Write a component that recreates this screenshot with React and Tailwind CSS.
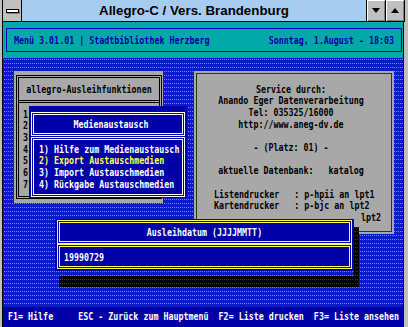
import React from 'react';

// one text row of the DOS screen: 5px cells, 11.67px rows
const Line = ({ children, className = '' }) => (
    <div className={`w-fit h-[11.67px] flex items-center ${className}`}>
        <div className="h-[8px] leading-[8px] text-[8.33px] font-bold whitespace-pre scale-y-[1.2]">{children}</div>
    </div>
);

const dots =
    'bg-[#20b8b8] bg-[image:repeating-linear-gradient(0deg,#0c1cc4_0_3px,transparent_3px_4px),repeating-linear-gradient(90deg,#0c1cc4_0_1px,transparent_1px_2px)]';
const shade =
    'bg-[#3a3a3a] bg-[image:repeating-linear-gradient(0deg,#000_0_3px,transparent_3px_4px),repeating-linear-gradient(90deg,#000_0_1px,transparent_1px_2px)]';

function TitleButton({ up }) {
    return (
        <div className="w-[19px] h-full border-l border-black bg-[#c0c0c0] flex items-center justify-center shadow-[inset_1px_1px_0_#fff,inset_-1px_-1px_0_#808080]">
            <svg width="8" height="5" viewBox="0 0 8 5">
                <polygon points={up ? '0,5 8,5 4,0' : '0,0 8,0 4,5'} fill="#000" />
            </svg>
        </div>
    );
}

export default function App() {
    const service = [
        'Service durch:',
        'Anando Eger Datenverarbeitung',
        'Tel: 035325/16000',
        'http://www.aneg-dv.de',
        ' ',
        '- (Platz: 01) -',
        ' ',
        'aktuelle Datenbank:   katalog',
        ' ',
    ];
    const media = [
        ['1) Hilfe zum Medienaustausch', 'text-white'],
        ['2) Export Austauschmedien', 'text-[#ffff55]'],
        ['3) Import Austauschmedien', 'text-white'],
        ['4) Rückgabe Austauschmedien', 'text-white'],
    ];

    return (
        <div className="w-[408px] h-[327px] overflow-hidden bg-[#c0c0c0] pl-[2px] font-['DejaVu_Sans_Mono',monospace]">
            <div className="h-full w-[404px] border-l border-black flex flex-col">
                {/* title bar */}
                <div className="h-[22px] mr-[1px] flex border-b border-r border-black bg-[#a8ccf0]">
                    <div className="w-[19px] h-full border-r border-black bg-[#c0c0c0] flex items-center justify-center">
                        <div className="w-[13px] h-[4px] bg-white border border-black shadow-[1px_1px_0_#808080]" />
                    </div>
                    <div className="flex-1 flex items-center justify-center font-['Liberation_Sans',Arial,sans-serif] font-bold text-[13.3px] text-black">
                        Allegro-C / Vers. Brandenburg
                    </div>
                    <TitleButton />
                    <TitleButton up />
                </div>

                <div className="flex-1 mr-[2px] border-r border-black flex flex-col">
                    {/* header */}
                    <div className="h-[36px] bg-[#00a8a8] pl-[3px] pr-[1px] py-[6px]">
                        <div className="h-full border border-[#0000a8] flex items-center justify-between px-[7px] text-[#0000a8]">
                            <Line>Menü 3.01.01 | Stadtbibliothek Herzberg</Line>
                            <Line>Sonntag, 1.August - 18:03</Line>
                        </div>
                    </div>

                    {/* desktop */}
                    <div className={`relative flex-1 ${dots}`}>
                        <div className="flex items-start pl-[11px] pt-[13px] gap-[31px]">
                            <div className="w-[149px] h-[132px] bg-[#a8a8a8] pt-[4px] pb-[4px] pl-[2px] pr-[1px] text-black">
                                <div className="h-full border-[3px] border-double border-black flex flex-col">
                                    <div className="h-[25px] border-b-[3px] border-double border-black flex items-center justify-center">
                                        <Line>allegro-Ausleihfunktionen</Line>
                                    </div>
                                    <div className="pl-[4px] pt-[5px]">
                                        {['1', '2', '3', '4', '5', '6', '7'].map((n) => (
                                            <Line key={n}>{n}</Line>
                                        ))}
                                    </div>
                                </div>
                            </div>

                            <div className="w-[200px] h-[163px] bg-[#a8a8a8] p-[2px] text-black">
                                <div className="h-full border border-[#303030] pt-[9px] pr-[6px] flex flex-col items-center">
                                    {service.map((s, i) => (
                                        <Line key={i}>{s}</Line>
                                    ))}
                                    <Line className="self-start ml-[17px]">Listendrucker   : p-hpii an lpt1</Line>
                                    <Line className="self-start ml-[17px]">Kartendrucker   : p-bjc an lpt2</Line>
                                    <Line className="self-start ml-[164px]">lpt2</Line>
                                </div>
                            </div>
                        </div>

                        {/* Medienaustausch menu */}
                        <div className="absolute left-[26px] top-[48px] w-[158px] h-[92px] bg-[#0000a8] pt-[6px] px-[2px] pb-[1px] flex flex-col">
                            <div className="h-[24px] border-[3px] border-double border-white flex items-center justify-center pl-[6px] text-white">
                                <Line>Medienaustausch</Line>
                            </div>
                            <div className="flex-1 mt-[1px] border-[3px] border-double border-white pl-[5px] pt-[3px]">
                                {media.map(([t, c]) => (
                                    <Line key={t} className={c}>{t}</Line>
                                ))}
                            </div>
                        </div>

                        {/* shadow of date dialog */}
                        <div className={`absolute left-[56px] top-[218px] w-[300px] h-[11px] ${shade}`} />
                        <div className={`absolute left-[351px] top-[169px] w-[5px] h-[60px] ${shade}`} />

                        {/* Ausleihdatum dialog */}
                        <div className="absolute left-[52px] top-[161px] w-[299px] h-[52px] bg-[#0000a8] pt-[1px] px-[2px] pb-[2px] flex flex-col text-white">
                            <div className="h-[24px] border-[3px] border-double border-[#ffff55] flex items-center justify-center">
                                <Line>Ausleihdatum (JJJJMMTT)</Line>
                            </div>
                            <div className="flex-1 border-[3px] border-double border-[#ffff55] flex items-center pl-[4px]">
                                <Line>19990729</Line>
                            </div>
                        </div>
                    </div>

                    {/* status line */}
                    <div className="h-[20px] bg-[#0000a8] text-white pt-[3px]">
                        <Line> F1= Hilfe     ESC - Zurück zum Hauptmenü  F2= Liste drucken  F3= Liste ansehen</Line>
                    </div>
                </div>
            </div>
        </div>
    );
}
